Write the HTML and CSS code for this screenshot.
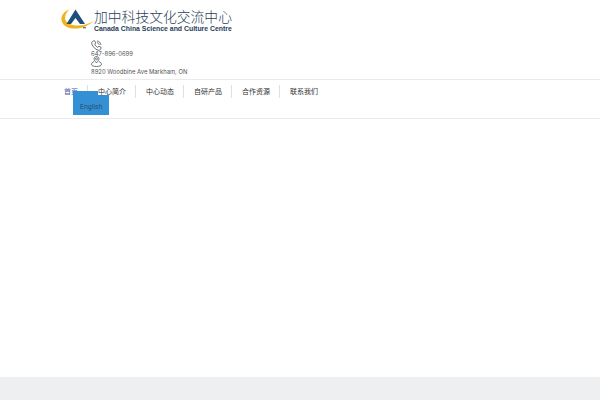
FILE: index.html
```html
<!DOCTYPE html>
<html lang="zh">
<head>
<meta charset="utf-8">
<title>加中科技文化交流中心</title>
<link rel="stylesheet" href="styles.css">
</head>
<body>
<div class="page">
  <header class="top">
    <div class="brand">
      <svg class="logo" width="34" height="26" viewBox="0 0 34 26" aria-hidden="true">
        <path d="M10 2 C3 5 0 10 2 15 C4 20 10 22 17 21.5 C23 21 29 18 33.5 14.5 C28 17 22 19 16 18.5 C10 18 5 15 5 11 C5 8 7 4 10 2Z" fill="#eeb31f"/>
        <path d="M15.5 2.5 L6.5 17 L11 17 L15.5 11 L20 17 L25 17 Z" fill="#1d4f7c"/>
        <path d="M23 20 h3 v1.4 h-3z" fill="#6a7d8c"/>
      </svg>
      <div class="brand-text">
        <div class="brand-zh">加中科技文化交流中心</div>
        <div class="brand-en">Canada China Science and Culture Centre</div>
      </div>
    </div>
    <div class="contact">
      <svg class="icon" width="11" height="11" viewBox="0 0 13 13" aria-hidden="true">
        <path d="M2.6 1.2 L4.3 .9 L5.6 3.5 L4.4 4.8 C5 6.6 6.3 7.9 8 8.6 L9.4 7.3 L12 8.8 L11.5 10.7 C11 11.9 9.6 12.4 8.3 12 C4.8 10.9 2 8 .9 4.5 C.6 3.2 1.2 1.8 2.6 1.2Z" fill="none" stroke="#3d4a55" stroke-width=".9"/>
        <path d="M7 1.2 C9.6 1.4 11.4 3.2 11.8 5.8 M7 3.2 C8.4 3.4 9.6 4.4 9.8 5.8" fill="none" stroke="#3d4a55" stroke-width=".9"/>
      </svg>
      <div class="contact-line">647-896-0699</div>
      <svg class="icon" width="11" height="11" viewBox="0 0 13 13" aria-hidden="true">
        <path d="M6.5 8.2 C4.8 6.2 3.6 4.8 3.6 3.4 C3.6 1.7 4.9 .6 6.5 .6 C8.1 .6 9.4 1.7 9.4 3.4 C9.4 4.8 8.2 6.2 6.5 8.2Z" fill="none" stroke="#3d4a55" stroke-width=".9"/>
        <circle cx="6.5" cy="3.4" r="1.2" fill="none" stroke="#3d4a55" stroke-width=".8"/>
        <path d="M3.6 6.6 C1.8 7.2 .6 8.4 .6 9.8 C.6 11.4 3 12.4 6.5 12.4 C10 12.4 12.4 11.4 12.4 9.8 C12.4 8.4 11.2 7.2 9.4 6.6" fill="none" stroke="#3d4a55" stroke-width=".9"/>
      </svg>
      <div class="contact-line contact-line-last">8920 Woodbine Ave Markham, ON</div>
    </div>
  </header>
  <nav class="nav">
    <ul class="menu">
      <li class="item current">
        <a class="link" href="#">首页</a>
        <ul class="dropdown"><li><a href="#">English</a></li></ul>
      </li>
      <li class="item"><a class="link" href="#">中心简介</a></li>
      <li class="item"><a class="link" href="#">中心动态</a></li>
      <li class="item"><a class="link" href="#">自研产品</a></li>
      <li class="item"><a class="link" href="#">合作资源</a></li>
      <li class="item last"><a class="link" href="#">联系我们</a></li>
    </ul>
  </nav>
  <main class="content"></main>
  <footer class="footer"></footer>
</div>
</body>
</html>
```
FILE: styles.css
```css
* { box-sizing: border-box; }
html, body { margin: 0; padding: 0; height: 100%; }
body { background: #fff; font-family: "Noto Sans CJK SC", "Open Sans", sans-serif; overflow: hidden; }
a { color: inherit; text-decoration: none; }
ul { list-style: none; margin: 0; padding: 0; }
.page { display: flex; flex-direction: column; height: 400px; }
.top { height: 79px; padding: 7px 0 0 60px; }
.brand { display: flex; align-items: flex-start; height: 30px; }
.logo { flex: none; }
.brand-text { display: flex; flex-direction: column; padding-top: 1px; }
.brand-zh { font-weight: 300; font-size: 13.8px; line-height: 17px; color: #2c4258; white-space: nowrap; }
.brand-en { font-family: "Liberation Sans", sans-serif; font-weight: 700; font-size: 6.9px; line-height: 8px; color: #1f3d58; white-space: nowrap; }
.contact { display: flex; flex-direction: column; align-items: flex-start; padding-left: 31px; margin-top: 3px; }
.icon { display: block; }
.contact-line { font-family: Inter, sans-serif; font-size: 5.9px; line-height: 5px; height: 5px; color: #555; white-space: nowrap; }
.contact-line-last { margin-top: 2px; }
.nav { height: 40px; border-top: 1px solid #ebebeb; border-bottom: 1px solid #ebebeb; padding-left: 54px; }
.menu { display: flex; align-items: flex-start; padding-top: 5px; }
.item { position: relative; width: 48px; height: 13px; padding-left: 10px; font-size: 7px; line-height: 13px; color: #333; border-right: 1px solid #e0e0e0; white-space: nowrap; }
.item.current { width: 34px; color: #4a5aa8; }
.item.last { border-right: 0; }
.link { display: block; width: 28px; height: 10px; }
.item:not(.current) .link { position: relative; z-index: 2; background: #fff; }
.dropdown { position: absolute; z-index: 1; left: 19px; top: 6px; width: 36px; height: 24px; padding: 11px 0 0 7px; background: #3490d5; color: #2a4a66; font-family: Inter, sans-serif; font-size: 6.6px; line-height: 10px; }
.content { flex: 1; }
.footer { height: 23px; background: #eeeff1; }
```
